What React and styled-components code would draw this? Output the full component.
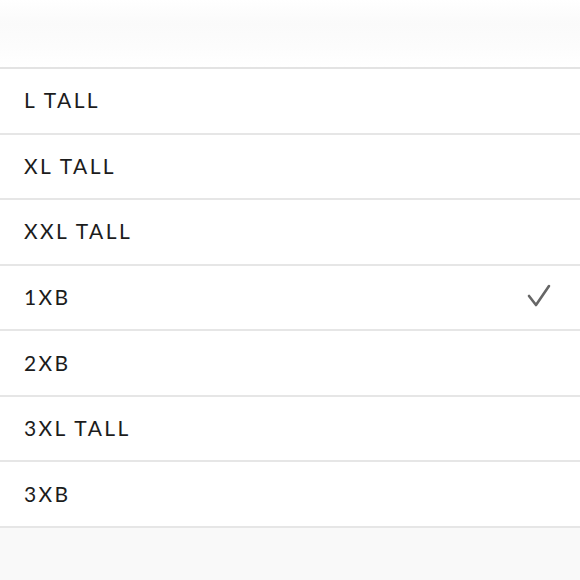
import styled, { createGlobalStyle } from "styled-components";

const Global = createGlobalStyle`
  html, body {
    margin: 0;
    padding: 0;
    background: #ffffff;
  }
  body {
    font-family: "Lato", "Open Sans", sans-serif;
  }
`;

const Page = styled.div`
  width: 580px;
  height: 580px;
  display: flex;
  flex-direction: column;
  overflow: hidden;
`;

const Header = styled.div`
  height: 69px;
  flex-shrink: 0;
  background: linear-gradient(180deg, #ffffff 0%, #fafafa 35%, #fcfcfc 70%, #ffffff 100%);
  border-bottom: 2px solid #e3e3e3;
  box-sizing: border-box;
`;

const List = styled.ul`
  list-style: none;
  margin: 0;
  padding: 0;
`;

const Row = styled.li`
  height: 65.57px;
  box-sizing: border-box;
  border-bottom: 2px solid #e6e6e6;
  display: flex;
  align-items: center;
  justify-content: space-between;
  padding: 0 28px 2px 24px;
  background: #fff;
`;

const Label = styled.span`
  font-size: 21px;
  letter-spacing: 2.4px;
  color: #1c1c1c;
  font-weight: 400;
`;

const Footer = styled.div`
  flex: 1;
  background: #f9f9f9;
`;

const Check = () => (
  <svg width="26" height="24" viewBox="0 0 26 24">
    <path
      d="M3 12 L10 21 L23 2"
      fill="none"
      stroke="#666"
      strokeWidth="2.6"
      strokeLinecap="round"
      strokeLinejoin="round"
    />
  </svg>
);

const sizes = [
  { name: "L TALL" },
  { name: "XL TALL" },
  { name: "XXL TALL" },
  { name: "1XB", selected: true },
  { name: "2XB" },
  { name: "3XL TALL" },
  { name: "3XB" },
];

export default function App() {
  return (
    <>
      <Global />
      <Page>
        <Header />
        <List>
          {sizes.map((s) => (
            <Row key={s.name}>
              <Label>{s.name}</Label>
              {s.selected && <Check />}
            </Row>
          ))}
        </List>
        <Footer />
      </Page>
    </>
  );
}
